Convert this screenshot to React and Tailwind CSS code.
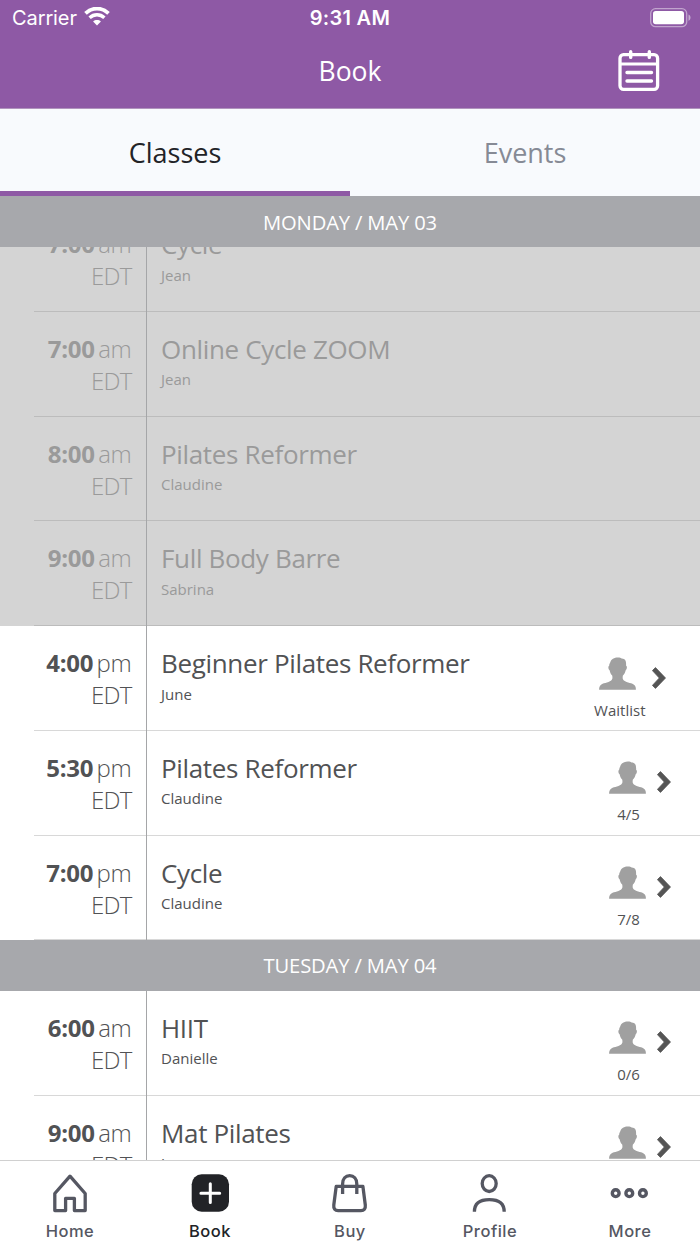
import React from 'react';

const monday = [
  { time: '7:00', period: 'am', title: 'Cycle', teacher: 'Jean', past: true },
  { time: '7:00', period: 'am', title: 'Online Cycle ZOOM', teacher: 'Jean', past: true },
  { time: '8:00', period: 'am', title: 'Pilates Reformer', teacher: 'Claudine', past: true },
  { time: '9:00', period: 'am', title: 'Full Body Barre', teacher: 'Sabrina', past: true },
  { time: '4:00', period: 'pm', title: 'Beginner Pilates Reformer', teacher: 'June', status: 'Waitlist' },
  { time: '5:30', period: 'pm', title: 'Pilates Reformer', teacher: 'Claudine', status: '4/5' },
  { time: '7:00', period: 'pm', title: 'Cycle', teacher: 'Claudine', status: '7/8' },
];

const tuesday = [
  { time: '6:00', period: 'am', title: 'HIIT', teacher: 'Danielle', status: '0/6' },
  { time: '9:00', period: 'am', title: 'Mat Pilates', teacher: 'June' },
];

const WifiIcon = () => (
  <svg viewBox="0 0 26 19" className="w-[26px] h-[19px] mb-[3px]" fill="none" stroke="#fff">
    <path d="M1.500 6.400C8-.1 18-.1 24.500 6.400" strokeWidth="3.700" />
    <path d="M5.600 10.800c4.300-4 10.500-4 14.800 0" strokeWidth="3.400" />
    <path d="M13 18.600l-3.900-4.100c2.200-1.900 5.600-1.900 7.800 0z" fill="#fff" stroke="none" />
  </svg>
);

const BatteryIcon = () => (
  <svg viewBox="0 0 42 20" className="w-[42px] h-5 mb-px" fill="none">
    <rect x="0.700" y="0.700" width="36" height="18" rx="4.800" stroke="#fff" strokeOpacity="0.45" strokeWidth="1.300" />
    <rect x="3" y="3" width="31" height="13.300" rx="2.800" fill="#fff" />
    <path d="M38.500 6.600c2.700 1.200 2.700 5 0 6.200z" fill="#fff" fillOpacity="0.5" />
  </svg>
);

const CalendarIcon = () => (
  <svg viewBox="0 0 42 42" className="w-[42px] h-[42px] mb-0.5" fill="none" stroke="#fff" strokeLinecap="round">
    <rect x="2" y="4.700" width="37.600" height="34.600" rx="3.500" strokeWidth="3.300" />
    <path d="M3 14h36" strokeWidth="3" />
    <path d="M12.700 1.800v5.600M31.300 1.800v5.600M9 22.500h24.500M9 31h24.500" strokeWidth="3.400" />
  </svg>
);

const PersonIcon = () => (
  <svg viewBox="0 0 37 33" className="w-[37px] h-[33px]" fill="#a0a0a0">
    <path d="M11.200 5.500C12 2 15.500.3 19.200.4c1.600 0 2.700.5 3.600 1.200 3.300.1 4.600 2.400 4.300 7.100 1.300.5.900 3.700-.4 4.500-.5 2.300-1.300 3.900-2.800 5.300-.5 2.300-.3 3.900 1 5 3.200 2.600 8.600 2.200 10.700 4.700 1.100 1.300 1.300 2.800 1.300 4.600H.100c0-1.800.3-3.300 1.400-4.600 2.100-2.500 7.500-2.100 10.700-4.700 1.300-1.100 1.500-2.700 1-5-1.500-1.400-2.100-3-2.600-5.300-1.300-.8-1.700-4-.4-4.500-.1-1.200.5-2.100 1-3.200z" />
  </svg>
);

const Chevron = () => (
  <svg viewBox="0 0 14 22" className="w-3.5 h-[22px]" fill="#555" stroke="#555" strokeWidth="0.800" strokeLinejoin="round">
    <path d="M.4 3.600L3.500.6 13.500 11 3.500 21.400.4 18.400 7.300 11z" />
  </svg>
);

const HomeIcon = () => (
  <svg viewBox="0 0 40 40" className="w-10 h-10" fill="none" stroke="#555762" strokeWidth="3.300" strokeLinejoin="round">
    <path d="M4.800 20.500L20 3.200l15.200 17.300v17.100H24.400V25.300h-8.800v12.300H4.800z" />
  </svg>
);

const BookIcon = () => (
  <svg viewBox="0 0 40 40" className="w-10 h-10" fill="none">
    <rect x="1.700" y="1.300" width="37.300" height="37.500" rx="10" fill="#222327" />
    <path d="M20.300 10.800v18.700M10.900 20.200h18.800" stroke="#fff" strokeWidth="3" strokeLinecap="round" />
  </svg>
);

const BuyIcon = () => (
  <svg viewBox="0 0 40 40" className="w-10 h-10" fill="none" stroke="#555762" strokeWidth="3.300" strokeLinejoin="round">
    <path d="M6.200 13.400h26.700l2.400 18.600c.4 3.700-1.300 5.600-4.300 5.600H8.100c-3 0-4.700-1.900-4.300-5.600z" />
    <path d="M12.600 21v-10c0-5.500 3-8.300 7.100-8.300s7.100 2.800 7.100 8.300v10" />
  </svg>
);

const ProfileIcon = () => (
  <svg viewBox="0 0 40 40" className="w-10 h-10" fill="none" stroke="#555762" strokeWidth="3.300">
    <ellipse cx="19.200" cy="10.600" rx="7" ry="7.900" />
    <path d="M4.400 38.700c0-8.500 5.500-12.100 14.900-12.100s14.900 3.600 14.900 12.100" />
  </svg>
);

const MoreIcon = () => (
  <svg viewBox="0 0 40 40" className="w-10 h-10" fill="none" stroke="#555762" strokeWidth="3.400">
    <circle cx="5.700" cy="20.200" r="3.400" />
    <circle cx="19.300" cy="20.200" r="3.400" />
    <circle cx="32.900" cy="20.200" r="3.400" />
  </svg>
);

const tabs = [
  { label: 'Home', icon: HomeIcon },
  { label: 'Book', icon: BookIcon, active: true },
  { label: 'Buy', icon: BuyIcon },
  { label: 'Profile', icon: ProfileIcon },
  { label: 'More', icon: MoreIcon },
];

const DayHeader = ({ children }) => (
  <div className="h-[50.7px] shrink-0 bg-[#a7a8ac] flex items-center justify-center text-[20.2px] tracking-[-0.15px] text-white">
    {children}
  </div>
);

const ClassRow = ({ item }) => {
  const waitlist = item.status === 'Waitlist';

  return (
    <div className={`h-[104.75px] shrink-0 pl-[34px] ${item.past ? 'bg-[#d4d4d4] text-[#9a9a9a]' : 'bg-white text-[#515254]'}`}>
      <div className={`h-full flex border-b ${item.past ? 'border-[#bcbcbc]' : 'border-[#d8d8d8]'}`}>
        <div className="w-[113px] -mb-px shrink-0 border-r border-[#a5a6a8] pr-[14.5px] pt-[21px] text-right text-[24px] leading-8 tracking-[-0.3px]">
          <div className="flex justify-end gap-[3.5px]">
            <span className="font-bold">{item.time}</span>
            <span className="font-light">{item.period}</span>
          </div>
          <div className="font-light tracking-[-0.8px]">EDT</div>
        </div>
        <div className="flex-1 pl-3.5 pt-5">
          <div className="text-[26px] leading-[34px] tracking-[-0.34px]">{item.title}</div>
          <div className="text-[15px] leading-5 mt-[3.5px]">{item.teacher}</div>
        </div>
        {!item.past && (
          <div className={`flex pt-[30.5px] ${waitlist ? 'gap-[6.5px] pr-[34px]' : 'gap-[11px] pr-[29px]'}`}>
            <div className="flex flex-col items-center">
              <div className={waitlist ? 'pr-1' : ''}>
                <PersonIcon />
              </div>
              <div className={`text-[15px] leading-5 mt-2.5 ${waitlist ? '' : 'pl-0.5'}`}>{item.status}</div>
            </div>
            <div className="pt-2.5">
              <Chevron />
            </div>
          </div>
        )}
      </div>
    </div>
  );
};

const App = () => {
  return (
    <div className="w-[700px] h-[1244px] flex flex-col overflow-hidden bg-white font-['Open_Sans',sans-serif]">
      <header className="h-[108.500px] shrink-0 bg-[#8e59a5] text-white border-b border-[#b094bd]">
        {/* Status bar */}
        <div className="h-9 grid grid-cols-3 items-center font-[Inter,sans-serif] text-[20px]">
          <div className="flex items-center gap-[7px] pl-3 tracking-[-0.1px]">
            <span>Carrier</span>
            <WifiIcon />
          </div>
          <div className="text-center font-semibold tracking-[0.3px]">9:31 AM</div>
          <div className="flex justify-end pr-2">
            <BatteryIcon />
          </div>
        </div>
        <div className="h-[72px] grid grid-cols-3 items-center">
          <h1 className="col-start-2 text-center text-[26.5px]">Book</h1>
          <div className="flex justify-end pr-10">
            <CalendarIcon />
          </div>
        </div>
      </header>

      <div className="h-[87.500px] shrink-0 grid grid-cols-2 bg-[#f8fafd] text-center text-[27px]">
        <div className="border-b-[5px] border-[#8e59a5] pt-6 leading-10 text-[#222327]">Classes</div>
        <div className="pt-6 leading-10 text-[#868a95]">Events</div>
      </div>

      <DayHeader>
        <span className="pt-px">MONDAY / MAY 03</span>
      </DayHeader>

      {/* Schedule, scrolled partway into the first class */}
      <main className="flex-1 min-h-0 overflow-hidden">
        <div className="-mt-[39.700px] flex flex-col">
          {monday.map((item, i) => (
            <ClassRow key={i} item={item} />
          ))}
          <DayHeader>TUESDAY / MAY 04</DayHeader>
          {tuesday.map((item, i) => (
            <ClassRow key={i} item={item} />
          ))}
        </div>
      </main>

      <nav className="h-[84px] shrink-0 border-t border-[#d0d0d0] bg-white grid grid-cols-5 font-[Inter,sans-serif]">
        {tabs.map(({ label, icon: Icon, active }) => (
          <div key={label} className="flex flex-col items-center pt-3">
            <Icon />
            <span className={`mt-1.5 text-[16.5px] leading-6 font-[450] tracking-[0.5px] ${active ? 'text-[#222327]' : 'text-[#555762]'}`}>
              {label}
            </span>
          </div>
        ))}
      </nav>
    </div>
  );
};

export default App;
